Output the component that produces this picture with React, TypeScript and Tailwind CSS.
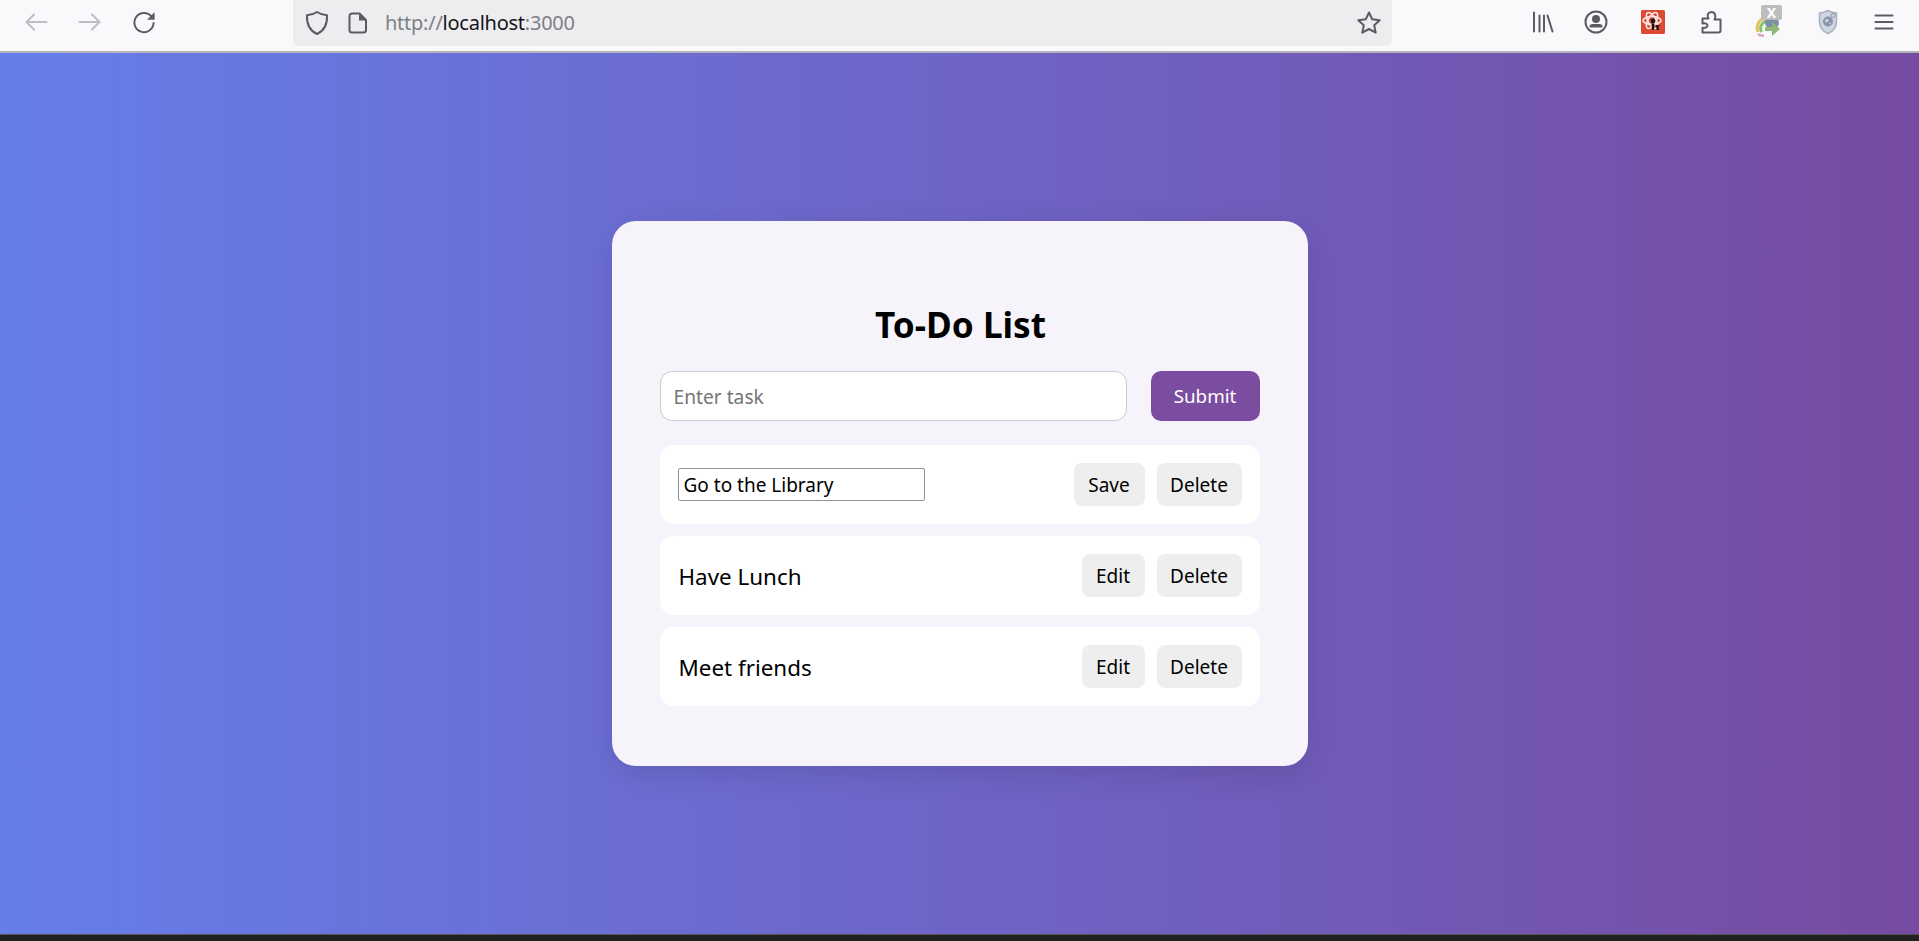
const font = "font-['Noto_Sans',sans-serif]"

function BackIcon() {
  return (
    <svg width="24" height="24" viewBox="0 0 24 24" fill="none" stroke="#bdbdc3" strokeWidth="2" strokeLinecap="round" strokeLinejoin="round">
      <path d="M22.5 12H2.5M10 4.5L2.5 12L10 19.5" />
    </svg>
  )
}

function ForwardIcon() {
  return (
    <svg width="24" height="24" viewBox="0 0 24 24" fill="none" stroke="#bdbdc3" strokeWidth="2" strokeLinecap="round" strokeLinejoin="round">
      <path d="M1.5 12H21.5M14 4.5L21.5 12L14 19.5" />
    </svg>
  )
}

function ReloadIcon() {
  return (
    <svg width="24" height="24" viewBox="0 0 24 24" fill="none">
      <path d="M19.5 6.5A9.6 9.6 0 1 0 21.6 13" stroke="#5b5b66" strokeWidth="2" strokeLinecap="round" />
      <path d="M22.6 2.2V9.8H15Z" fill="#5b5b66" />
    </svg>
  )
}

function ShieldIcon() {
  return (
    <svg width="24" height="26" viewBox="0 0 24 26" fill="none" stroke="#5b5b66" strokeWidth="2" strokeLinejoin="round">
      <path d="M12 2C9 4 5.500 5 2 5.200C1.600 13 3.500 20 12 24C20.500 20 22.400 13 22 5.200C18.500 5 15 4 12 2Z" />
    </svg>
  )
}

function PageIcon() {
  return (
    <svg width="20" height="22" viewBox="0 0 20 22" fill="none">
      <path d="M4 1.500H11.500L18 8V18A2.500 2.500 0 0 1 15.500 20.500H4A2.500 2.500 0 0 1 1.500 18V4A2.500 2.500 0 0 1 4 1.500Z" stroke="#5b5b66" strokeWidth="2" strokeLinejoin="round" />
      <path d="M11 1.500L18 8.500H11Z" fill="#5b5b66" />
    </svg>
  )
}

function StarIcon() {
  return (
    <svg width="26" height="26" viewBox="0 0 26 26" fill="none" stroke="#5b5b66" strokeWidth="2" strokeLinejoin="round">
      <path d="M13 2.500L16.200 9.200L23.700 10.200L18.200 15.300L19.700 22.700L13 19L6.300 22.700L7.800 15.300L2.300 10.200L9.800 9.200Z" />
    </svg>
  )
}

function LibraryIcon() {
  return (
    <svg width="22" height="22" viewBox="0 0 22 22" fill="none" stroke="#5b5b66" strokeWidth="2" strokeLinecap="round">
      <path d="M2 1.500V20.500M7.500 4.500V20.500M12 4.500V20.500M15.500 4.500L20.500 20.500" />
    </svg>
  )
}

function ProfileIcon() {
  return (
    <svg width="24" height="24" viewBox="0 0 24 24" fill="none">
      <circle cx="12" cy="12" r="10.500" stroke="#5b5b66" strokeWidth="2" />
      <circle cx="12" cy="9" r="4" fill="#5b5b66" />
      <path d="M5.500 16.500C5.500 14.800 7 14 8.500 14H15.500C17 14 18.500 14.800 18.500 16.500V17.500H5.500Z" fill="#5b5b66" />
    </svg>
  )
}

function AtomIcon() {
  return (
    <svg width="24" height="24" viewBox="0 0 24 24" fill="none">
      <rect width="24" height="24" rx="1.500" fill="#dc4a33" />
      <g stroke="#fbe6e1" strokeWidth="1.600">
        <ellipse cx="11" cy="10.500" rx="9" ry="4" />
        <ellipse cx="11" cy="10.500" rx="9" ry="4" transform="rotate(60 11 10.500)" />
        <ellipse cx="11" cy="10.500" rx="9" ry="4" transform="rotate(120 11 10.500)" />
      </g>
      <circle cx="12" cy="11" r="2.400" fill="#1c1414" />
      <path d="M10.500 13.500H13.500L13 20H11ZM15 15H18.500V16.300H17.500L18 20H15.500Z" fill="#1c1414" />
    </svg>
  )
}

function PuzzleIcon() {
  return (
    <svg width="22" height="24" viewBox="0 0 22 24" fill="none" stroke="#5b5b66" strokeWidth="2" strokeLinejoin="round">
      <path d="M3 22.500H18.500A2 2 0 0 0 20.500 20.500V9.500H14.500C16.500 6.500 15 2 11.500 2C8 2 6.500 5.500 8.500 8.500H2.500V13.500C5.500 12.500 7.500 14 7.500 15.500C7.500 17 5.500 18.500 2.500 17.800V22.500Z" />
    </svg>
  )
}

function DownloadIcon() {
  return (
    <div className="relative h-[34px] w-[30px]">
      <svg className="absolute left-0 top-[9px]" width="26" height="24" viewBox="0 0 26 24" fill="none">
        <path d="M3 18A11 11 0 0 1 14 3" stroke="#e3c25c" strokeWidth="3" />
        <path d="M6.500 18A8 8 0 0 1 14 6.500" stroke="#86c46d" strokeWidth="3" />
        <path d="M3 20C5 21.500 7 22 9 21.500" stroke="#d8a6c0" strokeWidth="2.500" />
        <ellipse cx="17" cy="9" rx="7" ry="6" fill="#7d8fa8" />
        <path d="M10 13H17V8L25 15L17 22V17H10Z" fill="#8db878" />
      </svg>
      <div className={`absolute left-[6px] top-0 flex h-[15px] w-[21px] items-center justify-center rounded-[2px] bg-[#bdbdbd] text-[14px] font-bold leading-none text-white ${font}`}>
        X
      </div>
    </div>
  )
}

function GlobeShieldIcon() {
  return (
    <svg width="20" height="26" viewBox="0 0 20 26" fill="none">
      <path d="M10 1.500C7.500 3 4.500 3.800 1.500 4V12.500C1.500 18 5 22.500 10 24.500C15 22.500 18.500 18 18.500 12.500V4C15.500 3.800 12.500 3 10 1.500Z" fill="#cfd5e1" stroke="#a8b1c4" strokeWidth="1.500" />
      <circle cx="10" cy="12.500" r="5" fill="#8793aa" />
      <path d="M7 10.500L11 10L10 13L7.500 13.500ZM11 14L13.500 13.500L12 16Z" fill="#cfd5e1" />
      <circle cx="15" cy="6.500" r="2" stroke="#8793aa" strokeWidth="1" />
    </svg>
  )
}

function MenuIcon() {
  return (
    <svg width="20" height="18" viewBox="0 0 20 18" fill="none" stroke="#5b5b66" strokeWidth="2" strokeLinecap="round">
      <path d="M1.500 2.500H18.500M1.500 9H18.500M1.500 15.500H18.500" />
    </svg>
  )
}

function Toolbar() {
  return (
    <div className="flex h-[53px] shrink-0 items-start border-b-2 border-[#b4b4ba] bg-[#f9f9fb]">
      <div className="flex h-[44px] w-[293px] shrink-0 items-center pl-[9px]">
        <div className="flex w-[54px] justify-center"><BackIcon /></div>
        <div className="flex w-[54px] justify-center"><ForwardIcon /></div>
        <div className="flex w-[54px] justify-center"><ReloadIcon /></div>
      </div>
      <div className="flex h-[46px] w-[1099px] shrink-0 items-center rounded-b-md bg-[#ededf0] pl-[12px] pr-[10px]">
        <ShieldIcon />
        <div className="ml-[19px]"><PageIcon /></div>
        <div className={`ml-[17px] text-[20px] tracking-[-0.25px] text-[#7f7f86] ${font}`}>
          http://<span className="text-[#15141a]">localhost</span>:3000
        </div>
        <div className="ml-auto"><StarIcon /></div>
      </div>
      <div className="flex h-[44px] items-center pl-[140px]">
        <LibraryIcon />
        <div className="ml-[30px]"><ProfileIcon /></div>
        <div className="ml-[33px]"><AtomIcon /></div>
        <div className="ml-[35px]"><PuzzleIcon /></div>
        <div className="ml-[33px]"><DownloadIcon /></div>
        <div className="ml-[33px]"><GlobeShieldIcon /></div>
        <div className="ml-[36px]"><MenuIcon /></div>
      </div>
    </div>
  )
}

function GreyButton({ label, width }: { label: string; width: string }) {
  return (
    <button className={`h-[43px] rounded-[8px] bg-[#eeeeee] pt-[1px] text-[19px] text-black ${width} ${font}`}>
      {label}
    </button>
  )
}

function TaskRow({ title, editing }: { title: string; editing?: boolean }) {
  return (
    <li className="mb-[12px] flex h-[79px] items-center justify-between rounded-[14px] bg-white px-[18px]">
      {editing ? (
        <input
          readOnly
          value={title}
          className={`h-[33px] w-[247px] rounded-[2px] border border-[#8f8f9d] px-[5px] pt-[1px] text-[19px] text-black outline-none ${font}`}
        />
      ) : (
        <span className={`pl-[1px] pt-[2px] text-[22.400px] text-black ${font}`}>{title}</span>
      )}
      <div className="flex gap-[12px]">
        <GreyButton label={editing ? 'Save' : 'Edit'} width={editing ? 'w-[71px]' : 'w-[63px]'} />
        <GreyButton label="Delete" width="w-[85px]" />
      </div>
    </li>
  )
}

export default function App() {
  return (
    <div className="flex h-screen flex-col overflow-hidden">
      <Toolbar />
      <main className="flex flex-1 items-center justify-center bg-[linear-gradient(90deg,#667eea,#764ba2)]">
        <div className="h-[545px] w-[696px] rounded-[24px] bg-[#f6f4fa] px-[48px] pt-[79px] shadow-[0_8px_32px_rgba(0,0,0,0.12)]">
          <h2 className={`pl-[2px] text-center text-[35.200px] font-bold leading-[48px] text-black ${font}`}>To-Do List</h2>
          <div className="mt-[23px] flex gap-[24px]">
            <input
              placeholder="Enter task"
              className={`h-[50px] w-[467px] rounded-[12px] border border-[#ccc] bg-white pl-[13px] pr-[12px] text-[19.200px] outline-none placeholder:text-[#757575] ${font}`}
            />
            <button className={`h-[50px] w-[109px] rounded-[10px] bg-[#7b4da0] pt-[1px] text-[18.800px] text-white ${font}`}>
              Submit
            </button>
          </div>
          <ul className="mt-[24px]">
            <TaskRow title="Go to the Library" editing />
            <TaskRow title="Have Lunch" />
            <TaskRow title="Meet friends" />
          </ul>
        </div>
      </main>
      <div className="h-[7px] shrink-0 border-t border-[#555] bg-[#222]" />
    </div>
  )
}
